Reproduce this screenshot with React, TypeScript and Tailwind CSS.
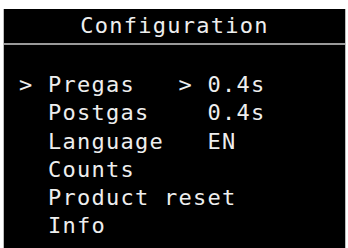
import React from "react";

const lines = [
  "> Pregas   > 0.4s",
  "  Postgas    0.4s",
  "  Language   EN",
  "  Counts",
  "  Product reset",
  "  Info",
];

export default function App() {
  return (
    <div className="w-[348px] h-[248px] bg-white overflow-hidden">
      <div
        className="ml-[3px] mt-[9px] w-[343px] h-[239px] bg-black border-l border-r border-[#bdbdbd] text-[#eeeeee] text-[22px] tracking-[1.25px]"
        style={{ fontFamily: '"DejaVu Sans Mono", monospace' }}
      >
        <div className="h-[34px] flex items-center justify-center leading-none">
          Configuration
        </div>
        <div className="h-[2px] bg-[#9a9a9a]" />
        <div className="pt-[26px] pl-[15px] leading-[28.3px] whitespace-pre">
          {lines.map((l, i) => (
            <div key={i}>{l}</div>
          ))}
        </div>
      </div>
    </div>
  );
}
